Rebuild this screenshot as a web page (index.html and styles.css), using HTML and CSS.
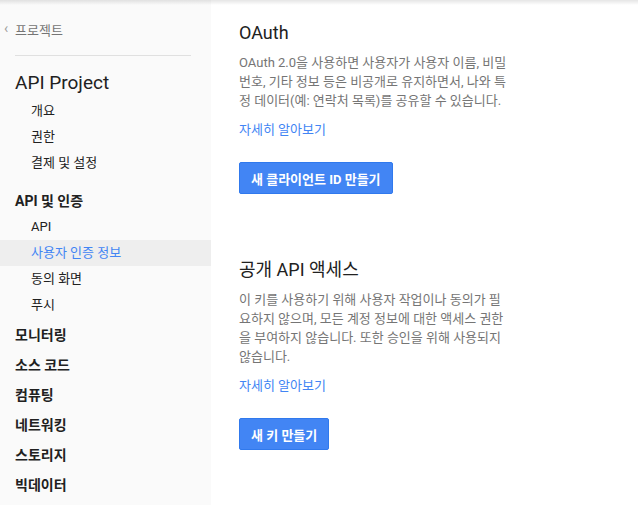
FILE: index.html
```html
<!DOCTYPE html>
<html lang="ko">
<head>
<meta charset="utf-8">
<link rel="stylesheet" href="styles.css">
</head>
<body>
<div class="topshadow"></div>
<div class="page">
  <nav class="sidebar">
    <div class="back"><span class="chev">&lsaquo;</span><span class="back-label">프로젝트</span></div>
    <div class="divider"></div>
    <div class="project">API Project</div>
    <ul class="sub">
      <li>개요</li>
      <li>권한</li>
      <li>결제 및 설정</li>
    </ul>
    <div class="group">API 및 인증</div>
    <ul class="sub sub2">
      <li>API</li>
      <li class="active">사용자 인증 정보</li>
      <li>동의 화면</li>
      <li>푸시</li>
    </ul>
    <ul class="top">
      <li>모니터링</li>
      <li>소스 코드</li>
      <li>컴퓨팅</li>
      <li>네트워킹</li>
      <li>스토리지</li>
      <li>빅데이터</li>
    </ul>
  </nav>
  <main class="main">
    <section class="sec">
      <h2>OAuth</h2>
      <p>OAuth 2.0을 사용하면 사용자가 사용자 이름, 비밀번호, 기타 정보 등은 비공개로 유지하면서, 나와 특정 데이터(예: 연락처 목록)를 공유할 수 있습니다.</p>
      <a class="link">자세히 알아보기</a>
      <button class="btn">새 클라이언트 ID 만들기</button>
    </section>
    <section class="sec sec2">
      <h2>공개 API 액세스</h2>
      <p>이 키를 사용하기 위해 사용자 작업이나 동의가 필요하지 않으며, 모든 계정 정보에 대한 액세스 권한을 부여하지 않습니다. 또한 승인을 위해 사용되지 않습니다.</p>
      <a class="link">자세히 알아보기</a>
      <button class="btn">새 키 만들기</button>
    </section>
  </main>
</div>
</body>
</html>
```
FILE: styles.css
```css
* { box-sizing: border-box; }
html, body { margin: 0; padding: 0; }
body {
  font-family: Roboto, "Noto Sans CJK KR", sans-serif;
  background: #fff;
  color: #212121;
  width: 638px;
  height: 505px;
  overflow: hidden;
  position: relative;
}
.topshadow {
  position: absolute;
  left: 0; right: 0; top: 0;
  height: 5px;
  background: linear-gradient(to bottom, rgba(0,0,0,0.10), rgba(0,0,0,0));
  z-index: 2;
}
.page { display: flex; height: 505px; }
.sidebar {
  width: 211px;
  flex: none;
  background: #fafafa;
  padding-top: 19px;
}
.back {
  display: flex;
  align-items: center;
  height: 20px;
  font-size: 13px;
  color: #757575;
  padding-left: 4px;
}
.chev { font-size: 14px; color: #9e9e9e; width: 11px; line-height: 20px; position: relative; top: -1px; }
.divider {
  margin: 16px 20px 0 15px;
  border-top: 1px solid #e0e0e0;
}
.project {
  padding-left: 15px;
  margin-top: 14px;
  font-size: 19px;
  line-height: 26px;
  color: #212121;
}
ul { list-style: none; margin: 0; padding: 0; }
.sub li {
  padding-left: 31px;
  height: 26px;
  line-height: 26px;
  font-size: 13px;
  color: #212121;
}
.sub { margin-top: 2px; }
.group {
  padding-left: 15px;
  margin-top: 12px;
  height: 26px;
  line-height: 26px;
  font-size: 14px;
  font-weight: 700;
}
.sub2 { margin-top: 0; }
.sub li.active { background: #eeeeee; color: #4285f4; }
.top { margin-top: 2px; }
.top li {
  padding-left: 15px;
  height: 30px;
  line-height: 30px;
  font-size: 14px;
  font-weight: 700;
  color: #212121;
}
.main { flex: 1; padding: 20px 0 0 28px; }
.sec { width: 273px; }
h2 {
  margin: 0;
  font-size: 18px;
  font-weight: 400;
  line-height: 26px;
  color: #212121;
}
p {
  margin: 7px 0 0;
  font-size: 13px;
  line-height: 19px;
  color: #757575;
}
.link {
  display: block;
  margin-top: 10px;
  font-size: 13px;
  line-height: 19px;
  color: #4285f4;
}
.btn {
  display: block;
  margin-top: 23px;
  height: 32px;
  padding: 0 11px;
  background: #4285f4;
  border: 1px solid #3079ed;
  border-radius: 2px;
  color: #fff;
  font-family: inherit;
  font-size: 13px;
  font-weight: 700;
}
.sec2 { margin-top: 63px; }
```
